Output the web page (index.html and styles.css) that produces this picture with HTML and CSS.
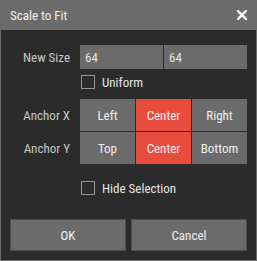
FILE: index.html
```html
<!DOCTYPE html>
<html>
<head>
<meta charset="utf-8">
<link rel="stylesheet" href="styles.css">
</head>
<body>
<div class="dialog">
  <div class="titlebar">
    <span class="title">Scale to Fit</span>
    <svg class="close" width="10" height="10" viewBox="0 0 10 10"><path d="M1 1 L9 9 M9 1 L1 9" stroke="#ffffff" stroke-width="2.4" stroke-linecap="square"/></svg>
  </div>
  <div class="body">
    <div class="form">
      <div class="label row-size">New Size</div>
      <div class="field row-size pair">
        <div class="input">64</div>
        <div class="input">64</div>
      </div>
      <div class="field row-check">
        <label class="check"><span class="box"></span><span>Uniform</span></label>
      </div>
      <div class="label row-ax">Anchor X</div>
      <div class="field row-ax seg">
        <div class="btn">Left</div>
        <div class="btn on">Center</div>
        <div class="btn">Right</div>
      </div>
      <div class="label row-ay">Anchor Y</div>
      <div class="field row-ay seg">
        <div class="btn">Top</div>
        <div class="btn on">Center</div>
        <div class="btn">Bottom</div>
      </div>
      <div class="field row-hide">
        <label class="check"><span class="box"></span><span>Hide Selection</span></label>
      </div>
    </div>
    <div class="actions">
      <div class="action">OK</div>
      <div class="action">Cancel</div>
    </div>
  </div>
</div>
</body>
</html>
```
FILE: styles.css
```css
html, body {
  margin: 0;
  padding: 0;
  background: #2b2b2b;
}
body {
  font-family: Roboto, "Liberation Sans", sans-serif;
  font-size: 13px;
  font-stretch: 75%;
}
.dialog {
  width: 257px;
  height: 261px;
  box-sizing: border-box;
  background: #6b6b6b;
  padding: 0 1px 1px 1px;
  display: flex;
  flex-direction: column;
}
.titlebar {
  height: 30px;
  flex: none;
  display: flex;
  align-items: center;
  justify-content: space-between;
  padding: 0 9px 0 9px;
  color: #f0f0f0;
}
.title {
  font-size: 13px;
}
.close {
  display: block;
  margin-top: -1px;
}
.body {
  flex: 1;
  background: #2b2b2b;
  padding: 15px 0 0 0;
  display: flex;
  flex-direction: column;
}
.form {
  display: grid;
  grid-template-columns: 69px 167px;
  column-gap: 10px;
}
.label {
  grid-column: 1;
  color: #c8c8c8;
  text-align: right;
  display: flex;
  align-items: center;
  justify-content: flex-end;
}
.field {
  grid-column: 2;
}
.row-size { grid-row: 1; height: 24px; }
.row-check { grid-row: 2; margin-top: 6px; height: 14px; }
.row-ax { grid-row: 3; margin-top: 10px; height: 32px; }
.row-ay { grid-row: 4; margin-top: 1px; height: 32px; }
.row-hide { grid-row: 5; margin-top: 17px; height: 14px; }
.pair, .seg {
  display: flex;
  gap: 1px;
}
.input {
  flex: 1;
  background: #6b6b6b;
  color: #e6e6e6;
  padding-left: 5px;
  display: flex;
  align-items: center;
}
.btn {
  flex: 1;
  background: #6b6b6b;
  color: #f0f0f0;
  display: flex;
  align-items: center;
  justify-content: center;
}
.btn.on {
  background: #e74c3c;
}
.check {
  display: flex;
  align-items: center;
  gap: 7px;
  margin-left: 1px;
  color: #e6e6e6;
  height: 14px;
}
.box {
  width: 14px;
  height: 14px;
  box-sizing: border-box;
  border: 1px solid #9a9a9a;
  flex: none;
}
.actions {
  display: flex;
  gap: 5px;
  padding: 0 0 0 9px;
  margin-top: 24px;
}
.action {
  width: 116px;
  height: 32px;
  box-sizing: border-box;
  background: #6b6b6b;
  border: 1px solid #4e4e4e;
  color: #f0f0f0;
  display: flex;
  align-items: center;
  justify-content: center;
}
```
